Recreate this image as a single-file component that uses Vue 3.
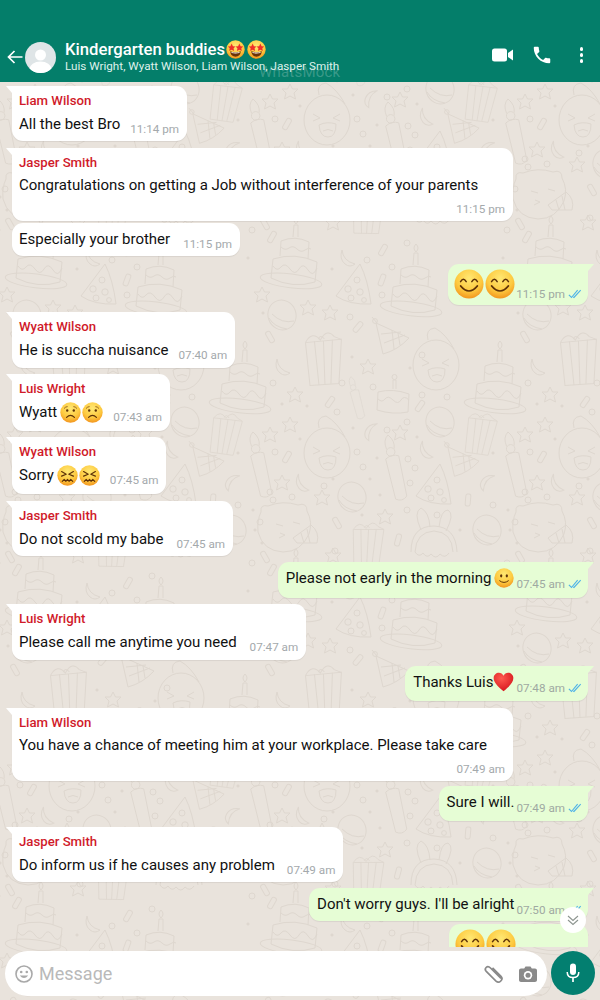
<template>
  <div class="phone">
    <svg class="wallpaper" width="600" height="1000" viewBox="0 0 600 1000">
      <defs>
        <radialGradient id="face-fill" cx="50%" cy="30%" r="72%">
          <stop offset="0%" stop-color="#ffe873" />
          <stop offset="62%" stop-color="#fdc93f" />
          <stop offset="100%" stop-color="#f2921c" />
        </radialGradient>
        <radialGradient id="heart-fill" cx="40%" cy="30%" r="75%">
          <stop offset="0%" stop-color="#ff5a4f" />
          <stop offset="100%" stop-color="#d5141c" />
        </radialGradient>

        <g id="d-cake">
          <ellipse cx="0" cy="16" rx="31" ry="7" transform="rotate(7)" />
          <path d="M-20 -6 L-22 13 Q0 24 22 17 L24 -3 Q2 -13 -20 -6 Z" />
          <path d="M-20 1 q4 6 8 1 t9 2 t9 0 t9 1 t9 -2" />
          <path d="M-13 -9 L-12 -24 Q2 -30 16 -23 L15 -6" />
          <path d="M-12 -18 q4 4 8 1 t8 1 t8 1 t6 -1" />
          <path d="M0 -28 L1 -40 L5 -40 L5 -28" />
          <path d="M3 -41 q-4 -4 0 -8 q4 4 0 8 Z" />
        </g>
        <g id="d-small-cake">
          <path d="M-15 -8 L-16 10 Q0 15 15 12 L16 -6 Q0 -12 -15 -8 Z" />
          <path d="M-15 -1 q4 4 7 0 t8 1 t8 0 t8 0" />
          <path d="M0 -11 L0 -20 L3 -20 L3 -11" />
          <circle cx="1.5" cy="-23" r="2.5" />
        </g>
        <g id="d-gift">
          <path d="M-17 -15 L-14 28 L15 27 L19 -17 Z" />
          <path d="M-8 -16 L-5 28 M1 -16 L1 28 M10 -17 L7 27" />
          <path d="M-17 -15 Q-10 -27 -2 -17 Q5 -29 12 -20 L19 -17" />
          <path d="M-4 -18 Q-2 -23 2 -18" />
        </g>
        <g id="d-hat">
          <path d="M7 -26 L-17 6 Q-4 15 18 14 Q15 -10 7 -26 Z" />
          <circle cx="4" cy="-10" r="3" />
          <circle cx="-5" cy="-1" r="3.2" />
          <circle cx="7" cy="2" r="3.2" />
          <circle cx="-2" cy="8" r="3" />
          <circle cx="11" cy="10" r="2.4" />
        </g>
        <g id="d-striped-hat">
          <path d="M-16 -17 L-9 14 Q6 10 17 -2 Z" />
          <path d="M-11 -6 L9 -8 M-8 3 L13 -5 M0 -10 L2 9 M6 -7 L8 5" />
          <circle cx="-17" cy="-19" r="2.4" />
          <path d="M-20 -23 L-15 -17" />
        </g>
        <g id="d-candle">
          <path d="M-7 -7 L-1 36 Q6 40 11 34 L7 -9 Q0 -12 -7 -7 Z" />
          <circle cx="-1" cy="-14" r="4.5" />
          <path d="M-5 -17 Q-8 -27 -2 -32 Q5 -25 3 -17" />
        </g>
        <g id="d-bun">
          <ellipse cx="0" cy="0" rx="14" ry="15" transform="rotate(-20)" />
          <path d="M-13 3 Q-8 12 5 14 M-10 -1 Q0 9 12 6" />
        </g>
        <g id="d-face">
          <ellipse cx="0" cy="3" rx="23" ry="25" />
          <path d="M-8 -22 Q-11 -33 -1 -34 Q10 -28 18 -13" />
          <path d="M-14 -3 l7 4 l-7 3 M13 -3 l-7 4 l7 3" />
          <path d="M-8 8 Q0 4 9 7 Q9 20 1 20 Q-7 20 -8 8 Z" />
          <path d="M-4 14 Q1 11 6 14" />
        </g>
        <g id="d-cat">
          <path d="M-26 -16 Q-27 -24 -19 -22 Q-4 -28 11 -23 Q20 -26 20 -17 Q26 -6 22 6 Q14 24 -4 24 Q-24 23 -29 4 Q-30 -8 -26 -16 Z" />
          <path d="M-11 -4 l7 2 M6 -6 l7 2 M-8 10 l6 -3 l-5 -2" />
          <path d="M6 10 L24 -3 Q33 4 30 15 L10 15 Z" />
          <path d="M14 5 L17 15 M20 1 L23 15" />
        </g>
        <g id="d-bunny">
          <path d="M-12 -10 Q-20 -28 -12 -32 Q-4 -28 -3 -13" />
          <path d="M6 -13 Q8 -30 15 -30 Q22 -26 13 -9" />
          <path d="M-22 12 Q-22 -14 1 -14 Q23 -13 24 12" />
          <path d="M-18 12 Q-17 -8 1 -9 Q19 -8 20 12" />
          <path d="M-18 12 q4 6 8 1 q4 6 8 1 q5 6 9 0 q5 5 9 -1" />
        </g>
        <path id="d-star" d="M0 -8 L2.5 -3 L8 -3 L4 1 L5.5 7 L0 4 L-5.5 7 L-4 1 L-8 -3 L-2.5 -3 Z" />
        <circle id="d-ring" cx="0" cy="0" r="3" />
        <circle id="d-dot" cx="0" cy="0" r="1.1" class="doodle-dot" />
        <rect id="d-conf" x="-2.5" y="-6" width="5" height="12" rx="2" />
        <path id="d-moon" d="M-6 -8 Q-5 3 7 6 Q2 10 -3 6 Q-9 1 -6 -8 Z" />

        <g id="e-eyes-smile">
          <circle cx="16" cy="16" r="15.5" fill="url(#face-fill)" />
          <path d="M7 13.5 Q10 8.5 13 13.5 M19 13.5 Q22 8.5 25 13.5" fill="none" stroke="#5e3208" stroke-width="1.6" stroke-linecap="round" />
          <path d="M7 18 Q16 29 25 18" fill="none" stroke="#5e3208" stroke-width="1.7" stroke-linecap="round" />
        </g>
        <g id="e-star">
          <circle cx="16" cy="16" r="15.5" fill="url(#face-fill)" />
          <path d="M9.5 6 L11.6 10.4 L16 11 L12.8 14 L13.6 18.5 L9.5 16.3 L5.4 18.5 L6.2 14 L3 11 L7.4 10.4 Z" fill="#ef2f2a" />
          <path d="M22.5 6 L24.6 10.4 L29 11 L25.8 14 L26.6 18.5 L22.5 16.3 L18.4 18.5 L19.2 14 L16 11 L20.4 10.4 Z" fill="#ef2f2a" />
          <path d="M7 19 Q16 22 25 19 Q24 28 16 28 Q8 28 7 19 Z" fill="#6b3208" />
          <path d="M9 20 Q16 22 23 20 L22.5 22 Q16 23.5 9.5 22 Z" fill="#fff" />
        </g>
        <g id="e-frown">
          <circle cx="16" cy="16" r="15.5" fill="url(#face-fill)" />
          <circle cx="11" cy="13" r="1.8" fill="#5e3208" />
          <circle cx="21" cy="13" r="1.8" fill="#5e3208" />
          <path d="M6.5 9.5 Q8.5 7 11 7 M25.5 9.5 Q23.5 7 21 7" fill="none" stroke="#7d4a10" stroke-width="1.2" stroke-linecap="round" />
          <path d="M10 23.5 Q16 17.5 22 23.5" fill="none" stroke="#5e3208" stroke-width="1.8" stroke-linecap="round" />
        </g>
        <g id="e-angry">
          <circle cx="16" cy="16" r="15.5" fill="url(#face-fill)" />
          <path d="M7 10 L14 14 L7 17 M25 10 L18 14 L25 17" fill="none" stroke="#5e3208" stroke-width="1.8" stroke-linecap="round" stroke-linejoin="round" />
          <path d="M8 25 l3 -3 l2.5 3 l2.5 -3 l2.5 3 l2.5 -3 l3 3" fill="none" stroke="#5e3208" stroke-width="1.7" stroke-linecap="round" stroke-linejoin="round" />
        </g>
        <g id="e-slight">
          <circle cx="16" cy="16" r="15.5" fill="url(#face-fill)" />
          <ellipse cx="11.5" cy="12.5" rx="1.8" ry="2.5" fill="#5e3208" />
          <ellipse cx="20.5" cy="12.5" rx="1.8" ry="2.5" fill="#5e3208" />
          <path d="M9 20.5 Q16 26 23 20.5" fill="none" stroke="#5e3208" stroke-width="1.6" stroke-linecap="round" />
        </g>
        <g id="e-heart">
          <path d="M16 30 C6 22 1 16 1 10 C1 5 5 2 9 2 C12 2 14.5 3.5 16 6.5 C17.5 3.5 20 2 23 2 C27 2 31 5 31 10 C31 16 26 22 16 30 Z" fill="url(#heart-fill)" />
        </g>
      </defs>
      <g class="doodles">
        <use
          v-for="(d, i) in doodles"
          :key="i"
          :href="'#d-' + d.id"
          :transform="`translate(${d.x} ${d.y}) rotate(${d.r}) scale(${d.s})`"
        />
      </g>
    </svg>

    <header class="topbar">
      <svg class="back" viewBox="0 0 16 14">
        <path d="M15.5 7 H2 M7.5 1 L1.5 7 L7.5 13" fill="none" stroke="#fff" stroke-width="1.7" />
      </svg>
      <div class="avatar">
        <svg viewBox="0 0 31 31">
          <defs>
            <clipPath id="avatar-clip"><circle cx="15.5" cy="15.5" r="15.5" /></clipPath>
          </defs>
          <g clip-path="url(#avatar-clip)">
            <rect width="31" height="31" fill="#dfe5e7" />
            <circle cx="15.5" cy="13" r="5.5" fill="#fff" />
            <ellipse cx="15.5" cy="27" rx="11" ry="7.5" fill="#fff" />
          </g>
        </svg>
      </div>
      <div class="titles">
        <div class="title">
          <span>Kindergarten buddies</span>
          <svg class="title-emoji" viewBox="0 0 32 32"><use href="#e-star" /></svg>
          <svg class="title-emoji" viewBox="0 0 32 32"><use href="#e-star" /></svg>
        </div>
        <div class="members">Luis Wright, Wyatt Wilson, Liam Wilson, Jasper Smith</div>
      </div>
      <div class="actions">
        <svg class="icon-video" viewBox="0 0 21 14">
          <rect x="0" y="0.5" width="15" height="13" rx="2.5" fill="#fff" />
          <path d="M16 5 L21 1.5 V12.5 L16 9 Z" fill="#fff" />
        </svg>
        <svg class="icon-phone" viewBox="0 0 24 24">
          <path d="M6.6 10.8c1.4 2.8 3.8 5.1 6.6 6.6l2.2-2.2c.3-.3.7-.4 1-.2 1.1.4 2.3.6 3.6.6.6 0 1 .4 1 1V20c0 .6-.4 1-1 1C10.6 21 3 13.4 3 4c0-.6.4-1 1-1h3.5c.6 0 1 .4 1 1 0 1.3.2 2.5.6 3.6.1.3 0 .7-.2 1l-2.3 2.2z" fill="#fff" />
        </svg>
        <div class="dots"><i></i><i></i><i></i></div>
      </div>
      <span class="watermark">WhatsMock</span>
    </header>

    <main class="chat">
      <div
        v-for="(m, i) in messages"
        :key="i"
        class="row"
        :class="m.out ? 'row-out' : 'row-in'"
        :style="{ marginTop: m.gap + 'px' }"
      >
        <div
          class="bubble"
          :class="{ out: m.out, tail: m.tail, stacked: m.stacked, big: m.big, cut: m.cut }"
          :style="{ paddingBottom: m.pad ? m.pad + 'px' : null }"
        >
          <div v-if="m.name" class="name">{{ m.name }}</div>
          <div class="body">
            <span class="text">
              <span v-if="m.text">{{ m.text }}</span>
              <svg
                v-for="(e, j) in m.emoji"
                :key="j"
                class="emoji"
                :class="'emoji-' + m.size"
                viewBox="0 0 32 32"
              ><use :href="'#e-' + e" /></svg>
            </span>
            <span
              v-if="m.time"
              class="meta"
              :style="{ marginLeft: m.space ? m.space + 'px' : null }"
            >
              <span class="time">{{ m.time }}</span>
              <svg v-if="m.out" class="ticks" viewBox="0 0 16 11">
                <path d="M1 6.5 L4 9.5 L11 1 M6 9 L6.8 9.5 L14.5 1" fill="none" stroke="#4fb3e8" stroke-width="1.3" />
              </svg>
            </span>
          </div>
        </div>
      </div>
    </main>

    <button class="scroll-down">
      <svg viewBox="0 0 14 14">
        <path d="M2 3 L7 7.5 L12 3 M2 7 L7 11.5 L12 7" fill="none" stroke="#8d9590" stroke-width="1.1" />
      </svg>
    </button>

    <footer class="composer">
      <div class="input">
        <svg class="icon-smile" viewBox="0 0 18 18">
          <circle cx="9" cy="9" r="8" fill="none" stroke="#a9a9a9" stroke-width="1.6" />
          <circle cx="6.2" cy="7" r="1.3" fill="#a9a9a9" />
          <circle cx="11.8" cy="7" r="1.3" fill="#a9a9a9" />
          <path d="M4.8 10.5 Q9 15.5 13.2 10.5 Z" fill="#a9a9a9" />
        </svg>
        <span class="placeholder">Message</span>
        <svg class="icon-clip" viewBox="0 0 20 20">
          <path d="M16.5 16 L6 5.5 C4.5 4 2.6 4 1.6 5 C.6 6 .7 7.9 2 9.2 L11.5 18.7 C13 20 15 19.8 16.3 18.5 C17.6 17.2 17.8 15.2 16.5 13.8 L8 5.3" fill="none" stroke="#8a8a8a" stroke-width="1.7" transform="translate(1.5 -1.5)" />
        </svg>
        <svg class="icon-camera" viewBox="0 0 18 16">
          <path d="M2 2.5 H5.2 L6.5 .5 H11.5 L12.8 2.5 H16 C17.1 2.5 18 3.4 18 4.5 V14 C18 15.1 17.1 16 16 16 H2 C.9 16 0 15.1 0 14 V4.5 C0 3.4 .9 2.5 2 2.5 Z" fill="#8a8a8a" />
          <circle cx="9" cy="9.2" r="4.2" fill="#fff" />
          <circle cx="9" cy="9.2" r="2.5" fill="#8a8a8a" />
        </svg>
      </div>
      <button class="mic">
        <svg viewBox="0 0 14 20">
          <rect x="4" y="0.5" width="6" height="11.5" rx="3" fill="#fff" />
          <path d="M1.2 9 C1.2 13 3.5 14.6 7 14.6 C10.5 14.6 12.8 13 12.8 9" fill="none" stroke="#fff" stroke-width="1.5" />
          <path d="M7 14 V19" stroke="#fff" stroke-width="1.7" />
        </svg>
      </button>
    </footer>
  </div>
</template>

<script setup>
const messages = [
  { name: "Liam Wilson", text: "All the best Bro", time: "11:14 pm", tail: true, gap: 4 },
  { name: "Jasper Smith", text: "Congratulations on getting a Job without interference of your parents", time: "11:15 pm", tail: true, stacked: true, gap: 7 },
  { text: "Especially your brother", time: "11:15 pm", gap: 2, pad: 6, space: 13 },
  { out: true, emoji: ["eyes-smile", "eyes-smile"], size: "big", big: true, time: "11:15 pm", tail: true, gap: 8, space: 1 },
  { name: "Wyatt Wilson", text: "He is succha nuisance", time: "07:40 am", tail: true, gap: 7, pad: 7 },
  { name: "Luis Wright", text: "Wyatt", emoji: ["frown", "frown"], size: "mid", time: "07:43 am", tail: true, gap: 6, pad: 8 },
  { name: "Wyatt Wilson", text: "Sorry", emoji: ["angry", "angry"], size: "mid", time: "07:45 am", tail: true, gap: 6, pad: 8 },
  { name: "Jasper Smith", text: "Do not scold my babe", time: "07:45 am", tail: true, gap: 7, space: 13 },
  { out: true, text: "Please not early in the morning", emoji: ["slight"], size: "small", time: "07:45 am", tail: true, gap: 6, pad: 9 },
  { name: "Luis Wright", text: "Please call me anytime you need", time: "07:47 am", tail: true, gap: 6, pad: 7, space: 13 },
  { out: true, text: "Thanks Luis", emoji: ["heart"], size: "heart", time: "07:48 am", tail: true, gap: 6 },
  { name: "Liam Wilson", text: "You have a chance of meeting him at your workplace. Please take care", time: "07:49 am", tail: true, stacked: true, gap: 7 },
  { out: true, text: "Sure I will.", time: "07:49 am", tail: true, gap: 5 },
  { name: "Jasper Smith", text: "Do inform us if he causes any problem", time: "07:49 am", tail: true, gap: 6, space: 12 },
  { out: true, text: "Don't worry guys. I'll be alright", time: "07:50 am", tail: true, gap: 6, pad: 6 },
  { out: true, emoji: ["eyes-smile", "eyes-smile"], size: "big", big: true, cut: true, gap: 3 },
];

// wallpaper tile, read off the reference, repeats every 255 x 333
const tile = [
  ["cake", 293, 265, 0, 1], ["cake", 413, 293, 0, 1], ["cake", 497, 390, 0, 1],
  ["hat", 353, 290, 0, 1], ["hat", 433, 490, 0, 1],
  ["gift", 323, 357, -2, 1], ["gift", 480, 432, 10, 0.8], ["gift", 367, 543, 3, 0.85],
  ["bun", 282, 315, 0, 1], ["bun", 440, 422, 0, 1], ["bun", 352, 497, 0, 1], ["bun", 487, 530, 0, 1],
  ["striped-hat", 392, 340, 0, 1], ["striped-hat", 463, 463, 0, 0.95],
  ["face", 436, 362, 0, 1], ["face", 327, 450, 0, 1],
  ["small-cake", 393, 400, 0, 1],
  ["candle", 355, 396, -8, 0.62], ["candle", 258, 462, -6, 0.95], ["candle", 393, 465, -6, 0.95],
  ["cat", 287, 528, 0, 1], ["bunny", 433, 540, 0, 1],
  ["star", 333, 556], ["star", 262, 295], ["star", 330, 313], ["star", 308, 308], ["star", 368, 367],
  ["star", 295, 395], ["star", 290, 425], ["star", 270, 435], ["star", 400, 433], ["star", 282, 483],
  ["star", 322, 498], ["star", 385, 517],
  ["ring", 252, 563], ["ring", 407, 243], ["ring", 367, 260], ["ring", 392, 267], ["ring", 382, 295],
  ["ring", 350, 317], ["ring", 422, 355], ["ring", 273, 383], ["ring", 342, 383], ["ring", 373, 387],
  ["ring", 337, 412], ["ring", 422, 395], ["ring", 447, 397], ["ring", 407, 422], ["ring", 387, 430],
  ["ring", 275, 452], ["ring", 357, 452], ["ring", 408, 459], ["ring", 363, 467], ["ring", 415, 468],
  ["ring", 410, 483], ["ring", 324, 486], ["ring", 270, 492], ["ring", 273, 500], ["ring", 292, 497],
  ["ring", 493, 505], ["ring", 407, 510], ["ring", 437, 515], ["ring", 260, 522], ["ring", 335, 551],
  ["dot", 248, 258], ["dot", 332, 269], ["dot", 263, 313], ["dot", 352, 357], ["dot", 410, 368],
  ["dot", 282, 404], ["dot", 307, 406], ["dot", 353, 428], ["dot", 300, 439], ["dot", 417, 437],
  ["dot", 377, 458], ["dot", 370, 479], ["dot", 333, 479], ["dot", 380, 495], ["dot", 253, 510],
  ["dot", 362, 515], ["dot", 255, 530], ["dot", 262, 543], ["dot", 460, 530], ["dot", 493, 453],
  ["conf", 272, 237, 30], ["moon", 348, 258, 0], ["conf", 383, 250, 30], ["conf", 382, 280, 20],
  ["conf", 358, 327, 40], ["conf", 270, 337, -30], ["moon", 283, 367, 0], ["conf", 330, 402, 35],
  ["conf", 420, 406, 35], ["moon", 372, 432, 70], ["conf", 287, 457, 30], ["moon", 427, 450, 10],
  ["moon", 303, 483, 10], ["moon", 488, 483, 80], ["conf", 468, 500, 5], ["conf", 337, 523, -30],
  ["conf", 398, 540, 15], ["conf", 265, 557, -30],
];

const doodles = [];
for (const [id, x, y, r = 0, s = 1] of tile) {
  for (let i = -1; i <= 1; i++) {
    for (let j = -1; j <= 2; j++) {
      const px = x + i * 255;
      const py = y + j * 333;
      if (px > -50 && px < 650 && py > 40 && py < 1050) {
        doodles.push({ id, x: px, y: py, r, s });
      }
    }
  }
}
</script>

<style>
html,
body {
  margin: 0;
  background: #e9e2db;
}
</style>

<style scoped>
.phone {
  position: relative;
  width: 600px;
  height: 1000px;
  overflow: hidden;
  display: flex;
  flex-direction: column;
  background: #e9e3dc;
  font-family: Roboto, "Liberation Sans", sans-serif;
}

.wallpaper {
  position: absolute;
  top: 0;
  left: 0;
}

.doodles {
  fill: none;
  stroke: #ded7cf;
  stroke-width: 1;
}

.doodle-dot {
  fill: #ded7cf;
}

.topbar {
  position: relative;
  flex: none;
  height: 82px;
  box-sizing: border-box;
  display: flex;
  align-items: flex-end;
  padding: 0 0 9px 7px;
  background: #047e6a;
  color: #fff;
}

.back {
  width: 16px;
  height: 14px;
  margin-bottom: 9px;
  flex: none;
}

.avatar {
  width: 31px;
  height: 31px;
  margin-left: 2px;
  flex: none;
}

.avatar svg {
  display: block;
}

.titles {
  margin-left: 9px;
  flex: 1;
  min-width: 0;
}

.title {
  display: flex;
  align-items: center;
  font-size: 16.7px;
  font-weight: 500;
  line-height: 18px;
}

.title-emoji {
  width: 19px;
  height: 19px;
  margin-left: 1px;
  margin-right: 1px;
}

.members {
  font-size: 11.7px;
  line-height: 14px;
  color: #dff1ec;
}

.actions {
  display: flex;
  align-items: center;
  margin-bottom: 7px;
  padding-right: 17px;
}

.icon-video {
  width: 21px;
  height: 14px;
}

.icon-phone {
  width: 22px;
  height: 22px;
  margin-left: 18px;
}

.dots {
  display: flex;
  flex-direction: column;
  gap: 2.5px;
  margin-left: 27px;
}

.dots i {
  width: 3.5px;
  height: 3.5px;
  border-radius: 50%;
  background: #fff;
}

.watermark {
  position: absolute;
  left: 259px;
  top: 63px;
  font-size: 15px;
  letter-spacing: 0.2px;
  color: rgba(255, 255, 255, 0.22);
}

.chat {
  position: relative;
  flex: 1;
  min-height: 0;
  overflow: hidden;
  padding: 0 12px;
}

.row {
  display: flex;
}

.row-out {
  justify-content: flex-end;
}

.bubble {
  position: relative;
  box-sizing: border-box;
  padding: 6px 8px 6px 7px;
  background: #fff;
  border-radius: 11px;
  box-shadow: 0 1px 1px rgba(0, 0, 0, 0.07);
  color: #111;
}

.bubble.out {
  background: #e6fdd5;
  padding: 5px 6px 8px 8px;
}

.bubble.tail.out {
  border-top-right-radius: 0;
}

.bubble.tail:not(.out) {
  border-top-left-radius: 0;
}

.bubble.tail::before {
  content: "";
  position: absolute;
  top: 0;
  border-top: 7px solid #fff;
}

.bubble.tail:not(.out)::before {
  left: -6px;
  border-left: 6px solid transparent;
}

.bubble.tail.out::before {
  right: -6px;
  border-top-color: #e6fdd5;
  border-right: 6px solid transparent;
}

.bubble.stacked {
  width: 501px;
}

.bubble.big {
  padding: 5px 6px 6px 6px;
}

.bubble.cut {
  width: 139px;
}

.name {
  font-size: 13.2px;
  font-weight: 500;
  line-height: 18px;
  margin-bottom: 3px;
  color: #d01a2a;
}

.body {
  display: flex;
  align-items: flex-end;
}

/* bubbles without a sender line sit a pixel tighter */
.bubble:not(.out) > .body:first-child {
  margin-top: -1px;
}

.stacked .name {
  margin-bottom: 2px;
}

.stacked .body {
  flex-direction: column;
  align-items: stretch;
}

.stacked .meta {
  align-self: flex-end;
  margin: 6px 0 -1px;
}

.text {
  display: inline-flex;
  align-items: center;
  font-size: 15px;
  line-height: 22px;
  white-space: nowrap;
}

.emoji {
  flex: none;
}

.text > span + .emoji {
  margin-left: 3px;
}

.emoji-mid {
  width: 21px;
  height: 21px;
  margin-left: 1px;
}

.emoji-small {
  width: 20px;
  height: 20px;
}

.emoji-heart {
  width: 21px;
  height: 22px;
}

.text > span + .emoji-heart {
  margin-left: 0;
}

.emoji-big {
  width: 30px;
  height: 30px;
}

.emoji-big + .emoji-big {
  margin-left: 1px;
}

.meta {
  display: flex;
  align-items: center;
  margin-left: 10px;
  height: 14px;
  margin-bottom: -1px;
}

.out .meta {
  margin-left: 2px;
  margin-bottom: -2px;
}

.time {
  font-size: 11.7px;
  line-height: 14px;
  color: #a4a9ac;
  white-space: nowrap;
}

.out .time {
  color: #9fa9a2;
}

.ticks {
  width: 14px;
  height: 10px;
  margin-left: 3px;
}

.scroll-down {
  position: absolute;
  left: 560px;
  top: 907px;
  width: 26px;
  height: 26px;
  padding: 6px;
  border: none;
  border-radius: 50%;
  background: #fff;
}

.scroll-down svg {
  display: block;
}

.composer {
  position: relative;
  flex: none;
  height: 53px;
  box-sizing: border-box;
  display: flex;
  gap: 4px;
  padding: 4px 5px 4px 5px;
}

.input {
  flex: 1;
  display: flex;
  align-items: center;
  padding: 0 10px;
  background: #fff;
  border-radius: 23px;
  height: 45px;
}

.icon-smile {
  width: 18px;
  height: 18px;
}

.placeholder {
  flex: 1;
  margin-left: 6px;
  font-size: 18px;
  color: #b9b9b9;
}

.icon-clip {
  width: 20px;
  height: 20px;
}

.icon-camera {
  width: 18px;
  height: 16px;
  margin-left: 16px;
}

.mic {
  width: 44px;
  height: 44px;
  padding: 12px 15px;
  border: none;
  border-radius: 50%;
  background: #037f70;
}

.mic svg {
  display: block;
  width: 14px;
  height: 20px;
}
</style>
